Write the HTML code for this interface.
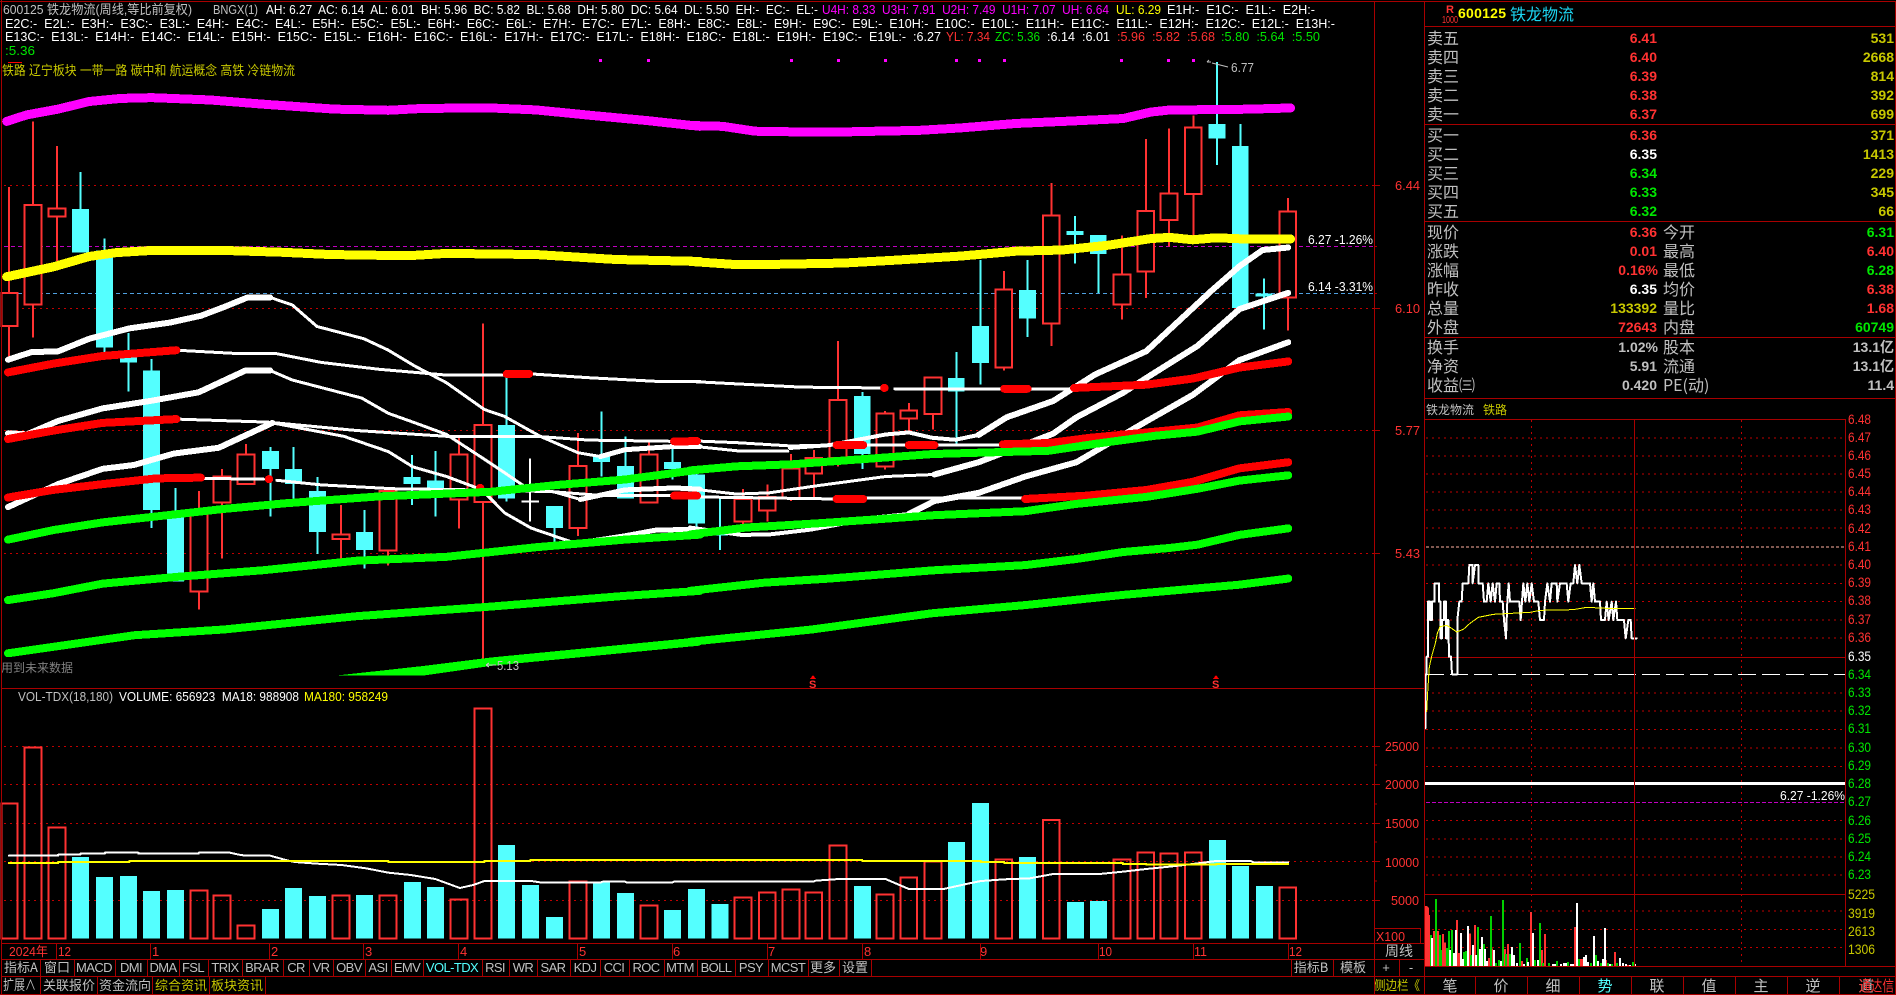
<!DOCTYPE html>
<html><head><meta charset="utf-8"><title>600125 铁龙物流</title>
<style>
html,body{margin:0;padding:0;background:#000;width:1896px;height:995px;overflow:hidden}
svg{display:block;position:absolute;left:0;top:0}
svg *{vector-effect:non-scaling-stroke}
text{font-family:"Liberation Sans","WenQuanYi Zen Hei","Noto Sans CJK SC",sans-serif;font-size:13px;fill:#c0c0c0;white-space:pre}
.w{fill:#fff}.g{fill:#c0c0c0}.r{fill:#ff3232}.n{fill:#00e600}.y{fill:#c8c800}.Y{fill:#ffff00}.m{fill:#ff00ff}.c{fill:#54ffff}
.l{font-size:16px;font-family:"WenQuanYi Zen Hei","Noto Sans CJK SC",sans-serif}
.b{font-size:14px;font-weight:bold;text-anchor:end}
.a{font-size:14px}
.tb{font-size:13px;letter-spacing:-.6px;text-anchor:middle}
.cj{font-size:13px;text-anchor:middle;font-family:"WenQuanYi Zen Hei","Noto Sans CJK SC",sans-serif}
.fr{fill:none;stroke:#a80000;stroke-width:1}
.dot{stroke:#c00000;stroke-width:1;stroke-dasharray:2 4;fill:none}
.red{stroke:#ff3232;stroke-width:2;fill:#000}
.rw{stroke:#ff3232;stroke-width:2;fill:none}
.cb{fill:#54ffff;stroke:none}
.cw{stroke:#54ffff;stroke-width:2;fill:none}
.ln{fill:none;stroke-linecap:round;stroke-linejoin:round}
</style></head><body>
<svg width="1896" height="995" viewBox="0 0 1896 995" shape-rendering="crispEdges">
<rect width="1896" height="995" fill="#000"/>

<!-- grid main -->
<path class="dot" d="M4 185.5H1374M4 308.5H1374M4 430.5H1374M4 553.5H1374"/>
<path d="M4 246.5H1374" stroke="#c000c0" stroke-dasharray="4 3" fill="none"/>
<path d="M4 293.5H1374" stroke="#4fa0e0" stroke-dasharray="4 3" fill="none"/>

<!-- candles left -->
<g transform="translate(0,90) scale(.44643,.38265)">
<path class="rw" d="M20 253V700M74 82V647M128 147V447M446 1048V1358M497 990V1225M551 925V952M764 1085V1225M869 1048V1243M1028 908V1146M1082 610V1490M1295 897V1165M1454 920V1078"/>
<path class="cw" d="M180 214V311M234 388V686M288 635V788M339 703V1145M393 1040V1100M606 933V1115M657 933V1068M711 1012V1212M816 1098V1250M923 954V1085M975 943V1115M1135 750V1075M1242 1087V1190M1347 840V1010M1401 905V1068M1506 930V1018M1560 985V1150"/>
<path d="M1187 963V1128M1168 1076H1207" stroke="#fff" stroke-width="2" fill="none"/>
<path class="cb" d="M161 311h38v114h-38zM215 420h38v253h-38zM269 698h38v14h-38zM320 733h38v365h-38zM374 1100h38v185h-38zM587 943h38v47h-38zM638 990h38v40h-38zM692 1048h38v107h-38zM797 1155h38v47h-38zM904 1011h38v19h-38zM956 1020h38v25h-38zM1116 875h38v193h-38zM1223 1087h38v58h-38zM1328 958h38v14h-38zM1382 983h38v85h-38zM1487 972h38v18h-38zM1541 1005h38v128h-38z"/>
<path class="red" d="M3 530h36v87h-36zM55 300h38v260h-38zM109 310h38v20h-38zM427 1097h38v213h-38zM478 1010h38v68h-38zM532 952h38v78h-38zM745 1162h38v12h-38zM850 1048h38v155h-38zM1009 952h38v118h-38zM1063 875h38v202h-38zM1276 982h38v163h-38zM1435 952h38v126h-38z"/>
</g>
<!-- candles right -->
<g transform="translate(690,50) scale(.46556,.40816)">
<path class="rw" d="M114 1075V1165M166 1065V1155M217 990V1105M266 980V1100M318 713V1020M419 885V1028M470 865V935M522 800V930M674 541V785M776 326V725M928 455V660M980 218V607M1029 192V482M1081 160V455M1284 363V687"/>
<path class="cw" d="M64 1095V1225M370 838V1027M572 740V965M624 515V820M725 515V703M827 407V523M877 453V595M1132 30V282M1182 181V630M1233 560V685"/>
<path class="cb" d="M46 1175h36v15h-36zM352 848h36v142h-36zM554 804h36v33h-36zM606 676h36v91h-36zM707 588h36v70h-36zM809 443h36v10h-36zM859 453h36v47h-36zM1114 181h36v36h-36zM1164 235h36v397h-36zM1215 596h36v8h-36z"/>
<path class="red" d="M96 1100h36v55h-36zM148 1095h36v33h-36zM199 1025h36v73h-36zM248 1000h36v37h-36zM300 857h36v143h-36zM401 890h36v130h-36zM452 883h36v20h-36zM504 802h36v90h-36zM656 587h36v191h-36zM758 405h36v265h-36zM910 550h36v73h-36zM961 395h36v148h-36zM1011 351h36v66h-36zM1063 190h36v163h-36zM1266 396h36v210h-36z"/>
</g>

<!-- indicator lines left -->
<g class="ln" transform="translate(0,90) scale(.44643,.38265)">
<path fill="none" stroke="#ff00ff" stroke-width="9" d="M15 82L60 65 130 50 200 30 270 22 340 20 470 26 600 38 750 50 870 53 950 48 1100 47 1200 52 1330 67 1450 80 1568 95"/>
<path fill="none" stroke="#ffff00" stroke-width="9" d="M15 488L120 462 200 435 260 425 330 420 520 420 630 424 740 430 850 432 930 432 1000 427 1200 430 1380 443 1568 448"/>
<g fill="none" stroke="#fff">
<path stroke-width="6" d="M18 705L70 685 130 683 200 650 290 623 380 608 450 590 500 568 555 542 605 542"/>
<path stroke-width="3" d="M605 542L655 562 710 618 815 650 870 680 930 722 1000 765 1085 835 1130 853 1210 905 1295 948 1345 958"/>
<path stroke-width="5" d="M1345 958L1400 940 1505 932 1568 932"/>
<path stroke-width="6" d="M18 897L60 900 130 865 230 832 340 812 445 790 550 733 605 733"/>
<path stroke-width="3" d="M605 733L655 758 810 805 870 845 930 870 1000 900 1085 965 1130 1000 1180 1040 1240 1050 1300 1070"/>
<path stroke-width="5" d="M1300 1070L1400 1045 1510 1040 1568 1043"/>
<path stroke-width="6" d="M18 1090L130 1030 230 990 300 980 390 950 490 935 610 870"/>
<path stroke-width="3" d="M610 870L770 905 870 945 925 985 1000 1010 1080 1045 1130 1105 1190 1145 1290 1185"/>
<path stroke-width="5" d="M1290 1185L1400 1165 1470 1150 1568 1148"/>
<path stroke-width="3" d="M395 680L520 688 615 688 720 712 850 730 1000 745 1130 745M1190 742L1320 752 1480 762 1568 762M395 860L600 868 800 890 1000 905 1200 905 1320 915 1500 918M450 1015L590 1017M620 1020L720 1032 880 1042 1060 1045M1085 1045L1240 1050 1350 1060 1500 1060"/>
</g>
<g fill="none" stroke="#ff0000" stroke-width="8">
<path d="M18 738L120 715 230 695 395 680M1135 742H1185M18 912L120 890 230 870 395 860M1510 918H1560M18 1065L120 1045 230 1030 350 1015 450 1013M602 1017H603M1075 1040H1076M1510 1060H1560"/>
</g>
<g fill="none" stroke="#00ff00" stroke-width="8">
<path d="M18 1175L120 1150 230 1130 400 1108 500 1095 640 1080 850 1062 1100 1050 1250 1032 1400 1018 1568 992"/>
<path d="M18 1333L120 1315 230 1290 400 1272 590 1255 800 1230 1000 1220 1200 1195 1400 1175 1568 1162"/>
<path d="M18 1472L120 1455 300 1425 500 1410 800 1375 1100 1350 1400 1322 1568 1309"/>
</g>
<path fill="#00ff00" stroke="none" d="M755 1530L950 1530 1100 1505 1568 1452V1430L1100 1483 950 1505z"/>
</g>

<!-- indicator lines right -->
<g class="ln" transform="translate(690,50) scale(.46556,.40816)">
<path fill="none" stroke="#ff00ff" stroke-width="9" d="M0 185L70 187 140 199 250 201 320 201 400 199 490 197 580 191 700 180 800 175 930 168 990 152 1030 147 1130 146 1200 145 1290 142"/>
<path fill="none" stroke="#ffff00" stroke-width="9" d="M0 518L90 525 190 525 330 522 440 515 580 505 700 493 800 490 900 478 990 462 1030 459 1080 465 1130 460 1190 463 1290 463"/>
<g fill="none" stroke="#fff">
<path stroke-width="3" d="M0 970L110 983 210 983"/>
<path stroke-width="4" d="M215 975L300 968 420 942 470 937 520 950 570 955 620 943"/>
<path stroke-width="6" d="M620 943L680 900 780 860 870 795 980 738 1120 590 1180 530 1230 490 1285 484"/>
<path stroke-width="3" d="M0 1075L100 1088 170 1085 270 1068 420 1045 525 1040"/>
<path stroke-width="6" d="M525 1040L620 1010 700 975 780 940 830 900 930 840 985 800 1090 725 1180 635 1285 595"/>
<path stroke-width="4" d="M0 1170L110 1188 170 1187 260 1175 400 1145 470 1137"/>
<path stroke-width="6" d="M470 1137L525 1105 620 1085 720 1045 830 1010 980 910 1080 845 1180 760 1285 716"/>
<path stroke-width="3" d="M0 812L100 818 240 826 410 828M440 830H670M725 830H825M15 958L100 962 215 970 315 968M375 968H470M530 968H672M15 1095L315 1100M372 1098H720"/>
</g>
<g fill="none" stroke="#ff0000" stroke-width="8">
<path d="M417 828H418M675 830H725M825 828L980 820 1080 805 1180 778 1285 763M0 958H15M315 968H372M470 968H525M672 966L770 963 860 950 1000 935 1090 925 1180 895 1285 887M0 1092H15M315 1100H372M720 1100L850 1092 980 1078 1080 1058 1180 1025 1285 1010"/>
</g>
<g fill="none" stroke="#00ff00" stroke-width="8">
<path d="M0 1030L100 1020 220 1015 400 1000 520 990 670 985 770 982 870 965 1000 945 1090 935 1180 910 1285 898"/>
<path d="M0 1187L120 1170 270 1160 400 1150 520 1140 720 1130 830 1112 980 1095 1090 1075 1180 1055 1285 1042"/>
<path d="M0 1325L160 1305 300 1295 520 1275 720 1262 830 1247 930 1230 1030 1220 1090 1212 1180 1188 1285 1172"/>
<path d="M0 1450L260 1420 520 1380 720 1360 930 1335 1180 1310 1285 1295"/>
</g>
</g>

<!-- magenta dots -->
<path fill="#ff00ff" d="M599 59h3v3h-3zM647 59h3v3h-3zM790 59h3v3h-3zM837 59h3v3h-3zM884 59h3v3h-3zM955 59h3v3h-3zM978 59h3v3h-3zM1003 59h3v3h-3zM1120 59h3v3h-3zM1167 59h3v3h-3zM1192 59h3v3h-3z"/>
<path d="M8 62.5H22" stroke="#ff0000" fill="none"/>

<!-- top text -->
<text x="3" y="14" textLength="189" lengthAdjust="spacingAndGlyphs">600125 铁龙物流(周线,等比前复权)</text>
<text x="213" y="14" textLength="45" lengthAdjust="spacingAndGlyphs">BNGX(1)</text>
<text class="w" x="266" y="14" textLength="552" lengthAdjust="spacingAndGlyphs">AH: 6.27  AC: 6.14  AL: 6.01  BH: 5.96  BC: 5.82  BL: 5.68  DH: 5.80  DC: 5.64  DL: 5.50  EH:-  EC:-  EL:-</text>
<text class="m" x="822" y="14" textLength="287" lengthAdjust="spacingAndGlyphs">U4H: 8.33  U3H: 7.91  U2H: 7.49  U1H: 7.07  UH: 6.64</text>
<text class="Y" x="1116" y="14" textLength="45" lengthAdjust="spacingAndGlyphs">UL: 6.29</text>
<text class="w" x="1167" y="14" textLength="148" lengthAdjust="spacingAndGlyphs">E1H:-  E1C:-  E1L:-  E2H:-</text>
<text class="w" x="5" y="28" textLength="1330" lengthAdjust="spacingAndGlyphs">E2C:-  E2L:-  E3H:-  E3C:-  E3L:-  E4H:-  E4C:-  E4L:-  E5H:-  E5C:-  E5L:-  E6H:-  E6C:-  E6L:-  E7H:-  E7C:-  E7L:-  E8H:-  E8C:-  E8L:-  E9H:-  E9C:-  E9L:-  E10H:-  E10C:-  E10L:-  E11H:-  E11C:-  E11L:-  E12H:-  E12C:-  E12L:-  E13H:-</text>
<text class="w" x="5" y="41" textLength="936" lengthAdjust="spacingAndGlyphs">E13C:-  E13L:-  E14H:-  E14C:-  E14L:-  E15H:-  E15C:-  E15L:-  E16H:-  E16C:-  E16L:-  E17H:-  E17C:-  E17L:-  E18H:-  E18C:-  E18L:-  E19H:-  E19C:-  E19L:-  :6.27</text>
<text class="r" x="946" y="41" textLength="44" lengthAdjust="spacingAndGlyphs">YL: 7.34</text>
<text class="n" x="995" y="41" textLength="45" lengthAdjust="spacingAndGlyphs">ZC: 5.36</text>
<text class="w" x="1047" y="41" textLength="63" lengthAdjust="spacingAndGlyphs">:6.14  :6.01</text>
<text class="r" x="1117" y="41" textLength="98" lengthAdjust="spacingAndGlyphs">:5.96  :5.82  :5.68</text>
<text class="n" x="1221" y="41" textLength="99" lengthAdjust="spacingAndGlyphs">:5.80  :5.64  :5.50</text>
<text class="n" x="5" y="55" textLength="30" lengthAdjust="spacingAndGlyphs">:5.36</text>
<text class="y" x="2" y="75" textLength="293" lengthAdjust="spacingAndGlyphs">铁路 辽宁板块 一带一路 碳中和 航运概念 高铁 冷链物流</text>

<!-- chart annotations -->
<path d="M1207 62H1211M1207 62L1209 60M1212 63L1228 67" stroke="#c0c0c0" fill="none" shape-rendering="auto"/>
<text x="1231" y="72" textLength="23" lengthAdjust="spacingAndGlyphs">6.77</text>
<text class="w" x="1308" y="244" textLength="65" lengthAdjust="spacingAndGlyphs">6.27 -1.26%</text>
<text class="w" x="1308" y="291" textLength="65" lengthAdjust="spacingAndGlyphs">6.14 -3.31%</text>
<path d="M486 665H496M486 665L489 663M486 665L489 667" stroke="#c0c0c0" fill="none"/>
<text x="497" y="670" textLength="22" lengthAdjust="spacingAndGlyphs">5.13</text>
<text x="1" y="672" style="fill:#808080;font-size:12px" textLength="72" lengthAdjust="spacingAndGlyphs">用到未来数据</text>
<path fill="#ff0000" d="M813 675l3 4h-6zM1216 675l3 4h-6z"/>
<text class="r" x="809" y="688" style="font-size:11px;font-weight:bold">S</text>
<text class="r" x="1212" y="688" style="font-size:11px;font-weight:bold">S</text>

<!-- main axis -->
<path d="M1374 185.5h6M1374 308.5h6M1374 430.5h6M1374 553.5h6M1374 246.5h3M1374 293.5h3" stroke="#a80000" fill="none"/>
<text class="r" x="1395" y="190" textLength="25" lengthAdjust="spacingAndGlyphs">6.44</text>
<text class="r" x="1395" y="313" textLength="25" lengthAdjust="spacingAndGlyphs">6.10</text>
<text class="r" x="1395" y="435" textLength="25" lengthAdjust="spacingAndGlyphs">5.77</text>
<text class="r" x="1395" y="558" textLength="25" lengthAdjust="spacingAndGlyphs">5.43</text>

<!-- volume grid -->
<path class="dot" d="M4 746.5H1374M4 784.5H1374M4 823.5H1374M4 861.5H1374M4 900.5H1374"/>
<text x="18" y="701" textLength="95" lengthAdjust="spacingAndGlyphs">VOL-TDX(18,180)</text>
<text class="w" x="119" y="701" textLength="180" lengthAdjust="spacingAndGlyphs">VOLUME: 656923  MA18: 988908</text>
<text class="Y" x="304" y="701" textLength="84" lengthAdjust="spacingAndGlyphs">MA180: 958249</text>

<g transform="translate(0,680) scale(.44643,.33333)">
<path class="cb" d="M161 531h38V776h-38zM215 591h38V776h-38zM269 588h38V776h-38zM320 633h38V776h-38zM374 630h38V776h-38zM587 687h38V776h-38zM638 624h38V776h-38zM692 648h38V776h-38zM797 645h38V776h-38zM905 606h38V776h-38zM956 621h38V776h-38zM1116 495h38V776h-38zM1169 615h38V776h-38zM1223 711h38V776h-38zM1328 608h38V776h-38zM1382 639h38V776h-38zM1487 690h38V776h-38zM1541 627h38V776h-38z"/>
<path class="rw" d="M3 371h36V776h-36zM55 203h38V776h-38zM109 443h38V776h-38zM427 632h38V776h-38zM478 647h38V776h-38zM532 737h38V776h-38zM745 647h38V776h-38zM850 647h38V776h-38zM1009 659h38V776h-38zM1063 85h38V776h-38zM1276 605h38V776h-38zM1435 677h38V776h-38z"/>
<path class="ln" fill="none" stroke="#fff" stroke-width="2" d="M20 527H130V524H180V521H235V518H310V521H445V518H515L535 524 550 527H605L640 540 660 546 710 551 765 555 820 565 870 578 920 585 975 597 1030 624 1060 615 1085 603H1190L1215 608H1345L1350 605H1400L1405 608H1505L1510 605H1568"/>
<path class="ln" fill="none" stroke="#ffff00" stroke-width="2" d="M20 549H130V546H290V543H870V546H1085V543H1188V540H1568"/>
</g>
<g transform="translate(690,680) scale(.46556,.33333)">
<path class="cb" d="M46 672h37V776h-37zM352 618h37V776h-37zM554 486h37V776h-37zM606 369h36V776h-36zM707 531h36V776h-36zM810 666h36V776h-36zM859 663h37V776h-37zM1115 480h36V776h-36zM1164 558h37V776h-37zM1216 618h36V776h-36z"/>
<path class="rw" d="M96 653h36V776h-36zM148 638h36V776h-36zM199 629h36V776h-36zM248 638h36V776h-36zM300 497h36V776h-36zM401 644h36V776h-36zM452 593h36V776h-36zM504 545h36V776h-36zM656 539h36V776h-36zM758 420h36V776h-36zM910 539h36V776h-36zM961 518h36V776h-36zM1011 521h36V776h-36zM1063 518h36V776h-36zM1266 623h36V776h-36z"/>
<path class="ln" fill="none" stroke="#fff" stroke-width="2" d="M0 605H265L270 602 320 597H420L470 627H545L600 610 625 603 675 598 730 595 780 582H880L930 575 980 567 1030 560 1080 552 1130 543H1205L1210 547H1285"/>
<path class="ln" fill="none" stroke="#ffff00" stroke-width="2" d="M0 540H370V543H625V546H675V549H930V552H980V554H1130V552H1285"/>
</g>

<path d="M1374 746.5h6M1374 784.5h6M1374 823.5h6M1374 861.5h6M1374 900.5h6M1374 765h3M1374 804h3M1374 842h3M1374 881h3" stroke="#a80000" fill="none"/>
<text class="r" x="1385" y="751" textLength="34" lengthAdjust="spacingAndGlyphs">25000</text>
<text class="r" x="1385" y="789" textLength="34" lengthAdjust="spacingAndGlyphs">20000</text>
<text class="r" x="1385" y="828" textLength="34" lengthAdjust="spacingAndGlyphs">15000</text>
<text class="r" x="1385" y="867" textLength="34" lengthAdjust="spacingAndGlyphs">10000</text>
<text class="r" x="1391" y="905" textLength="28" lengthAdjust="spacingAndGlyphs">5000</text>
<text class="r" x="1376" y="941" textLength="29" lengthAdjust="spacingAndGlyphs">X100</text>

<!-- date axis -->
<text class="r" x="9" y="956" textLength="39" lengthAdjust="spacingAndGlyphs">2024年</text>
<text class="r" x="58" y="956" textLength="13" lengthAdjust="spacingAndGlyphs">12</text>
<text class="r" x="152" y="956">1</text><text class="r" x="271" y="956">2</text><text class="r" x="365" y="956">3</text><text class="r" x="460" y="956">4</text><text class="r" x="579" y="956">5</text><text class="r" x="673" y="956">6</text><text class="r" x="768" y="956">7</text><text class="r" x="864" y="956">8</text><text class="r" x="980" y="956">9</text>
<text class="r" x="1099" y="956" textLength="13" lengthAdjust="spacingAndGlyphs">10</text>
<text class="r" x="1194" y="956" textLength="13" lengthAdjust="spacingAndGlyphs">11</text>
<text class="r" x="1289" y="956" textLength="13" lengthAdjust="spacingAndGlyphs">12</text>
<path class="fr" d="M56.5 943V959M150.5 943V959M269.5 943V959M363.5 943V959M458.5 943V959M577.5 943V959M672.5 943V959M767.5 943V959M862.5 943V959M980.5 943V959M1098.5 943V959M1193.5 943V959M1288.5 943V959"/>

<!-- toolbar row 1 -->
<g>
<text class="cj" x="21" y="972">指标A</text><text class="cj" x="57" y="972">窗口</text>
<text class="tb" x="94" y="972">MACD</text><text class="tb" x="131" y="972">DMI</text><text class="tb" x="163" y="972">DMA</text><text class="tb" x="193" y="972">FSL</text><text class="tb" x="225" y="972">TRIX</text><text class="tb" x="262" y="972">BRAR</text><text class="tb" x="296" y="972">CR</text><text class="tb" x="321" y="972">VR</text><text class="tb" x="349" y="972">OBV</text><text class="tb" x="378" y="972">ASI</text><text class="tb" x="407" y="972">EMV</text><text class="tb c" x="452" y="972">VOL-TDX</text><text class="tb" x="495" y="972">RSI</text><text class="tb" x="523" y="972">WR</text><text class="tb" x="553" y="972">SAR</text><text class="tb" x="585" y="972">KDJ</text><text class="tb" x="614" y="972">CCI</text><text class="tb" x="646" y="972">ROC</text><text class="tb" x="680" y="972">MTM</text><text class="tb" x="716" y="972">BOLL</text><text class="tb" x="751" y="972">PSY</text><text class="tb" x="788" y="972">MCST</text>
<text class="cj" x="823" y="972">更多</text><text class="cj" x="855" y="972">设置</text>
<text class="cj" x="1311" y="972">指标B</text>
<text x="1340" y="972" style="font-size:13px;font-family:'WenQuanYi Zen Hei','Noto Sans CJK SC',sans-serif" textLength="26" lengthAdjust="spacing" >模 板</text>
<text x="1386" y="972" text-anchor="middle">+</text><text x="1411" y="972" text-anchor="middle">-</text>
<text class="cj" x="1399" y="956" style="font-size:14px">周线</text>
</g>
<!-- toolbar row 2 -->
<text x="3" y="990" textLength="33" lengthAdjust="spacingAndGlyphs" style="font-size:14px;font-family:'WenQuanYi Zen Hei','Noto Sans CJK SC',sans-serif">扩展∧</text><text class="cj" x="69" y="990">关联报价</text><text class="cj" x="125" y="990">资金流向</text><text class="cj y" x="181" y="990">综合资讯</text><text class="cj y" x="237" y="990">板块资讯</text>
<text class="cj y" x="1397" y="990" textLength="46" lengthAdjust="spacingAndGlyphs">侧边栏《</text>
<text class="cj" x="1450" y="991" style="font-size:15px">笔</text><text class="cj" x="1501" y="991" style="font-size:15px">价</text><text class="cj" x="1553" y="991" style="font-size:15px">细</text><text class="cj c" x="1605" y="991" style="font-size:15px">势</text><text class="cj" x="1657" y="991" style="font-size:15px">联</text><text class="cj" x="1709" y="991" style="font-size:15px">值</text><text class="cj" x="1761" y="991" style="font-size:15px">主</text><text class="cj" x="1813" y="991" style="font-size:15px">逆</text><text class="cj" x="1866" y="991" style="font-size:15px">道</text>
<text class="r" x="1859" y="991" textLength="35" lengthAdjust="spacingAndGlyphs" style="font-size:15px;font-family:'WenQuanYi Zen Hei','Noto Sans CJK SC',sans-serif">通达信</text>

<!-- right panel header -->
<text class="r" x="1446" y="13" style="font-size:11px;font-weight:bold">R</text>
<text class="r" x="1442" y="23" style="font-size:10px" textLength="16" lengthAdjust="spacingAndGlyphs">1000</text>
<text class="Y" x="1458" y="18" style="font-size:14px;font-weight:bold" textLength="48">600125</text>
<text x="1510" y="20" style="fill:#1cd4f0;font-size:16px;font-family:'WenQuanYi Zen Hei','Noto Sans CJK SC',sans-serif">铁龙物流</text>

<!-- order book -->
<g>
<text class="l" x="1427" y="44">卖五</text><text class="l" x="1427" y="63">卖四</text><text class="l" x="1427" y="82">卖三</text><text class="l" x="1427" y="101">卖二</text><text class="l" x="1427" y="120">卖一</text>
<text class="l" x="1427" y="141">买一</text><text class="l" x="1427" y="160">买二</text><text class="l" x="1427" y="179">买三</text><text class="l" x="1427" y="198">买四</text><text class="l" x="1427" y="217">买五</text>
<text class="b r" x="1657" y="43">6.41</text><text class="b r" x="1657" y="62">6.40</text><text class="b r" x="1657" y="81">6.39</text><text class="b r" x="1657" y="100">6.38</text><text class="b r" x="1657" y="119">6.37</text>
<text class="b r" x="1657" y="140">6.36</text><text class="b w" x="1657" y="159">6.35</text><text class="b n" x="1657" y="178">6.34</text><text class="b n" x="1657" y="197">6.33</text><text class="b n" x="1657" y="216">6.32</text>
<text class="b y" x="1894" y="43">531</text><text class="b y" x="1894" y="62">2668</text><text class="b y" x="1894" y="81">814</text><text class="b y" x="1894" y="100">392</text><text class="b y" x="1894" y="119">699</text>
<text class="b y" x="1894" y="140">371</text><text class="b y" x="1894" y="159">1413</text><text class="b y" x="1894" y="178">229</text><text class="b y" x="1894" y="197">345</text><text class="b y" x="1894" y="216">66</text>
</g>
<!-- stats -->
<g>
<text class="l" x="1427" y="238">现价</text><text class="l" x="1427" y="257">涨跌</text><text class="l" x="1427" y="276">涨幅</text><text class="l" x="1427" y="295">昨收</text><text class="l" x="1427" y="314">总量</text><text class="l" x="1427" y="333">外盘</text>
<text class="l" x="1427" y="353">换手</text><text class="l" x="1427" y="372">净资</text><text class="l" x="1427" y="391">收益㈢</text>
<text class="l" x="1663" y="238">今开</text><text class="l" x="1663" y="257">最高</text><text class="l" x="1663" y="276">最低</text><text class="l" x="1663" y="295">均价</text><text class="l" x="1663" y="314">量比</text><text class="l" x="1663" y="333">内盘</text>
<text class="l" x="1663" y="353">股本</text><text class="l" x="1663" y="372">流通</text><text class="l" x="1663" y="391">PE(动)</text>
<text class="b r" x="1657" y="237">6.36</text><text class="b r" x="1657" y="256">0.01</text><text class="b r" x="1658" y="275">0.16%</text><text class="b w" x="1657" y="294">6.35</text><text class="b y" x="1657" y="313">133392</text><text class="b r" x="1657" y="332">72643</text>
<text class="b g" x="1658" y="352">1.02%</text><text class="b g" x="1657" y="371">5.91</text><text class="b g" x="1657" y="390">0.420</text>
<text class="b n" x="1894" y="237">6.31</text><text class="b r" x="1894" y="256">6.40</text><text class="b n" x="1894" y="275">6.28</text><text class="b r" x="1894" y="294">6.38</text><text class="b r" x="1894" y="313">1.68</text><text class="b n" x="1894" y="332">60749</text>
<text class="b g" x="1894" y="352">13.1亿</text><text class="b g" x="1894" y="371">13.1亿</text><text class="b g" x="1894" y="390">11.4</text>
</g>
<text x="1426" y="414" style="font-size:12px;font-family:'WenQuanYi Zen Hei','Noto Sans CJK SC',sans-serif">铁龙物流</text>
<text class="y" x="1483" y="414" style="font-size:12px;font-family:'WenQuanYi Zen Hei','Noto Sans CJK SC',sans-serif">铁路</text>

<!-- intraday grid -->
<path class="dot" d="M1426 438H1845M1426 456H1845M1426 474H1845M1426 492H1845M1426 510H1845M1426 528H1845M1426 565H1845M1426 583.5H1845M1426 601.5H1845M1426 620H1845M1426 638H1845M1426 693H1845M1426 711H1845M1426 729.5H1845M1426 748H1845M1426 766.5H1845M1426 820.5H1845M1426 839H1845M1426 857H1845M1426 875H1845M1426 911H1845M1426 929.5H1845M1426 947.5H1845M1531.5 420V966M1741.5 420V966"/>
<path d="M1426 547H1845" stroke="#ffb0a0" stroke-dasharray="3 2" fill="none"/>
<path d="M1426 657.5H1845" stroke="#a80000" fill="none"/>
<path d="M1426 674.5H1845" stroke="#fff" stroke-dasharray="18 6" fill="none"/>
<path d="M1424 783.5H1846" stroke="#fff" stroke-width="3" fill="none"/>
<path d="M1426 802.5H1845" stroke="#c000c0" stroke-dasharray="4 2" fill="none"/>
<text class="w" x="1780" y="800" textLength="65" lengthAdjust="spacingAndGlyphs">6.27 -1.26%</text>
<g transform="translate(1420,560) scale(.33333)">
<path class="ln" fill="none" stroke="#fff" stroke-width="2" d="M16 505V343H20V290H24V125H30V180H36V125H44V70H57V125H62V235H66V180H72V125H78V235H82V180H85L87 290H93L96 343H112V180L118 125H125L128 70H145L148 15H158V70L165 15H175V70H188L192 125H200L205 70 212 125 218 70 225 125 230 70H238L240 125H248L252 180 258 235 262 125 266 70 270 125H298L302 180 310 70 316 125 322 70 328 125 335 70 342 125H355L360 180H372L375 125 382 70 390 125 395 70H410L412 125 420 70H440L445 125 452 70H460L465 15 472 70 478 15 485 70H510L515 125 520 70 525 125H540L543 180H555L560 125 566 180 575 125 580 180 588 125 592 180H612L617 235 625 180H632L635 235H650"/>
<path class="ln" fill="none" stroke="#ffff00" stroke-width="1" d="M20 455L24 380 28 320 36 285 46 250 52 220 60 200 80 196 95 205 110 216 130 208 150 190 175 172 220 163 330 157 360 151 460 149 500 142 560 145 645 146"/>
</g>
<g transform="translate(1420,780) scale(.33333)" fill="none" stroke-width="2">
<path stroke="#ff3232" d="M18 378V559M21 380V559M24 383V559M27 405V559M42 453V559M54 453V559M69 462V559M75 487V559M111 420V559M117 519V559M150 460V559M165 435V559M207 534V559M216 505V559M255 507V559M264 492V559M306 543V559M333 396V559M366 510V559M375 462V559M465 441V559M480 537V559M486 537V559M558 540V559M585 516V559M624 555V559"/>
<path stroke="#00d000" d="M33 465V559M48 357V559M60 465V559M63 510V559M81 504V559M87 453V559M96 450V559M132 516V559M138 513V559M153 525V559M174 441V559M192 492V559M213 408V559M228 549V559M237 540V559M249 360V559M258 522V559M270 522V559M300 489V559M321 534V559M345 540V559M360 429V559M369 549V559M387 549V559M411 543V559M444 546V559M477 537V559M513 549V559M528 525V559M543 549V559M564 549V559M576 552V559M591 549V559M639 546V559"/>
<path stroke="#fff" d="M36 474V559M90 510V559M102 519V559M108 450V559M123 459V559M129 537V559M144 438V559M159 495V559M168 525V559M180 507V559M186 471V559M195 507V559M201 543V559M222 510V559M243 543V559M276 501V559M282 525V559M291 549V559M312 552V559M324 546V559M339 459V559M354 540V559M399 552V559M405 552V559M423 552V559M432 549V559M438 549V559M453 552V559M459 552V559M471 369V559M492 531V559M498 525V559M504 546V559M522 468V559M534 543V559M549 537V559M555 444V559M570 552V559M600 534V559M609 549V559M618 552V559M630 555V559M645 552V559"/>
</g>

<!-- intraday axis labels -->
<g>
<text class="r a" x="1848" y="424" textLength="23" lengthAdjust="spacingAndGlyphs">6.48</text>
<text class="r a" x="1848" y="442" textLength="23" lengthAdjust="spacingAndGlyphs">6.47</text>
<text class="r a" x="1848" y="460" textLength="23" lengthAdjust="spacingAndGlyphs">6.46</text>
<text class="r a" x="1848" y="478" textLength="23" lengthAdjust="spacingAndGlyphs">6.45</text>
<text class="r a" x="1848" y="496" textLength="23" lengthAdjust="spacingAndGlyphs">6.44</text>
<text class="r a" x="1848" y="514" textLength="23" lengthAdjust="spacingAndGlyphs">6.43</text>
<text class="r a" x="1848" y="533" textLength="23" lengthAdjust="spacingAndGlyphs">6.42</text>
<text class="r a" x="1848" y="551" textLength="23" lengthAdjust="spacingAndGlyphs">6.41</text>
<text class="r a" x="1848" y="569" textLength="23" lengthAdjust="spacingAndGlyphs">6.40</text>
<text class="r a" x="1848" y="587" textLength="23" lengthAdjust="spacingAndGlyphs">6.39</text>
<text class="r a" x="1848" y="605" textLength="23" lengthAdjust="spacingAndGlyphs">6.38</text>
<text class="r a" x="1848" y="624" textLength="23" lengthAdjust="spacingAndGlyphs">6.37</text>
<text class="r a" x="1848" y="642" textLength="23" lengthAdjust="spacingAndGlyphs">6.36</text>
<text class="w a" x="1848" y="661" textLength="23" lengthAdjust="spacingAndGlyphs">6.35</text>
<text class="n a" x="1848" y="679" textLength="23" lengthAdjust="spacingAndGlyphs">6.34</text>
<text class="n a" x="1848" y="697" textLength="23" lengthAdjust="spacingAndGlyphs">6.33</text>
<text class="n a" x="1848" y="715" textLength="23" lengthAdjust="spacingAndGlyphs">6.32</text>
<text class="n a" x="1848" y="733" textLength="23" lengthAdjust="spacingAndGlyphs">6.31</text>
<text class="n a" x="1848" y="752" textLength="23" lengthAdjust="spacingAndGlyphs">6.30</text>
<text class="n a" x="1848" y="770" textLength="23" lengthAdjust="spacingAndGlyphs">6.29</text>
<text class="n a" x="1848" y="788" textLength="23" lengthAdjust="spacingAndGlyphs">6.28</text>
<text class="n a" x="1848" y="806" textLength="23" lengthAdjust="spacingAndGlyphs">6.27</text>
<text class="n a" x="1848" y="825" textLength="23" lengthAdjust="spacingAndGlyphs">6.26</text>
<text class="n a" x="1848" y="843" textLength="23" lengthAdjust="spacingAndGlyphs">6.25</text>
<text class="n a" x="1848" y="861" textLength="23" lengthAdjust="spacingAndGlyphs">6.24</text>
<text class="n a" x="1848" y="879" textLength="23" lengthAdjust="spacingAndGlyphs">6.23</text>
<text class="y a" x="1848" y="899" textLength="27" lengthAdjust="spacingAndGlyphs">5225</text>
<text class="y a" x="1848" y="918" textLength="27" lengthAdjust="spacingAndGlyphs">3919</text>
<text class="y a" x="1848" y="936" textLength="27" lengthAdjust="spacingAndGlyphs">2613</text>
<text class="y a" x="1848" y="954" textLength="27" lengthAdjust="spacingAndGlyphs">1306</text>
</g>

<!-- frame lines -->
<path class="fr" d="M0 1.5H1896M1.5 0V994M1374.5 1V943M1424.5 1V994M1895.5 1V994
M1 688.5H1424M1 943.5H1424M1 959.5H1424M1 976.5H1896M0 994.5H1896M1374.5 928.5H1420M1420.5 928V943
M1374.5 943V994M1399.5 959V976M1291.5 959V976M1333.5 959V976
M40.5 959V976M74.5 959V976M115.5 959V976M147.5 959V976M179.5 959V976M208.5 959V976M242.5 959V976M283.5 959V976M309.5 959V976M333.5 959V976M365.5 959V976M391.5 959V976M423.5 959V976M482.5 959V976M509.5 959V976M537.5 959V976M570.5 959V976M600.5 959V976M629.5 959V976M664.5 959V976M697.5 959V976M735.5 959V976M768.5 959V976M808.5 959V976M839.5 959V976M871.5 959V976
M40.5 976V994M97.5 976V994M152.5 976V994M209.5 976V994M265.5 976V994
M1424 26.5H1896M1424 124.5H1896M1424 221.5H1896M1424 337.5H1896M1424 398.5H1896M1424 419.5H1846M1845.5 419V966M1424 894.5H1846M1424 966.5H1896M1634.5 419V966
M1475.5 976V994M1527.5 976V994M1579.5 976V994M1631.5 976V994M1683.5 976V994M1735.5 976V994M1787.5 976V994M1839.5 976V994"/>
</svg>
</body></html>
